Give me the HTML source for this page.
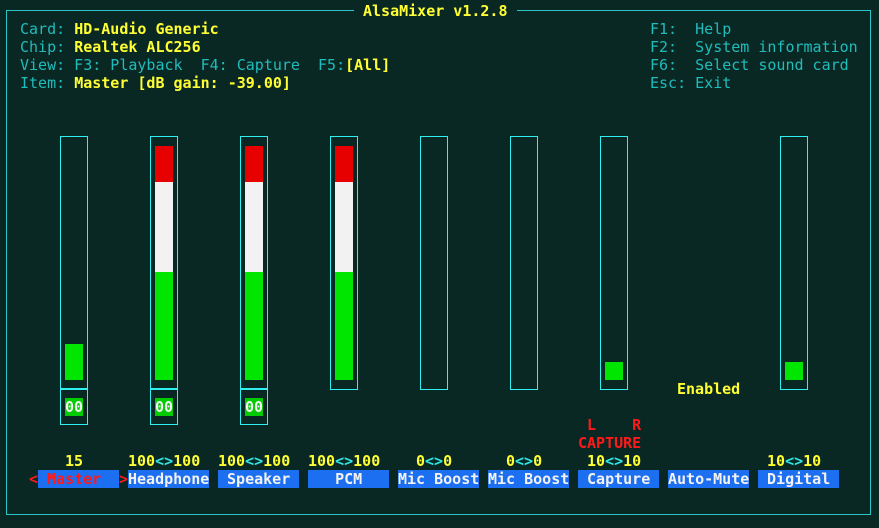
<!DOCTYPE html>
<html><head><meta charset="utf-8"><style>
body{margin:0;width:879px;height:528px;background:#0a2823;overflow:hidden;position:relative;font-family:"DejaVu Sans Mono","Liberation Mono",monospace;font-size:15px;}
.t{position:absolute;line-height:18px;white-space:pre;height:18px;margin-top:1px;}
.c{color:#1fbcbc}.y{color:#ffff33;font-weight:bold}.w{color:#f2f2f2;font-weight:bold}.r{color:#ff1a1a;font-weight:bold}.cy{color:#33e6e6;font-weight:bold}
.b{position:absolute;border:1.5px solid #2ff0f0;box-sizing:border-box}
.f{position:absolute;}
.lab{position:absolute;background:#1d6ff2;height:18px;line-height:18px;color:#f2f2f2;font-weight:bold;white-space:pre;margin-top:1px;}
.oo{position:absolute;background:#00cc00;color:#f2f2f2;font-weight:bold;width:18px;height:18px;line-height:18px;text-align:center;margin-top:1px;}
</style></head><body>
<div style="position:absolute;left:6px;top:10px;width:865px;height:505px;border:1.5px solid #28c8c8;box-sizing:border-box"></div>
<div class="t y" style="left:354px;top:1px;background:#0a2823;padding:0 9px">AlsaMixer v1.2.8</div>
<div class="t" style="left:20px;top:19px"><span class="c">Card: </span><span class="y">HD-Audio Generic</span></div>
<div class="t" style="left:20px;top:37px"><span class="c">Chip: </span><span class="y">Realtek ALC256</span></div>
<div class="t" style="left:20px;top:55px"><span class="c">View: F3: Playback  F4: Capture  F5:</span><span class="y">[All]</span></div>
<div class="t" style="left:20px;top:73px"><span class="c">Item: </span><span class="y">Master [dB gain: -39.00]</span></div>
<div class="t c" style="left:650px;top:19px">F1:  Help</div>
<div class="t c" style="left:650px;top:37px">F2:  System information</div>
<div class="t c" style="left:650px;top:55px">F6:  Select sound card</div>
<div class="t c" style="left:650px;top:73px">Esc: Exit</div>

<div class="b" style="left:60px;top:136px;width:28px;height:254px"></div>
<div class="b" style="left:60px;top:388px;width:28px;height:37px"></div>
<div class="f" style="left:65px;top:344px;width:18px;height:36px;background:#00e600"></div>
<div class="oo" style="left:65px;top:397px">00</div>

<div class="b" style="left:150px;top:136px;width:28px;height:254px"></div>
<div class="b" style="left:150px;top:388px;width:28px;height:37px"></div>
<div class="f" style="left:155px;top:146px;width:18px;height:36px;background:#e60000"></div>
<div class="f" style="left:155px;top:182px;width:18px;height:90px;background:#f2f2f2"></div>
<div class="f" style="left:155px;top:272px;width:18px;height:108px;background:#00e600"></div>
<div class="oo" style="left:155px;top:397px">00</div>

<div class="b" style="left:240px;top:136px;width:28px;height:254px"></div>
<div class="b" style="left:240px;top:388px;width:28px;height:37px"></div>
<div class="f" style="left:245px;top:146px;width:18px;height:36px;background:#e60000"></div>
<div class="f" style="left:245px;top:182px;width:18px;height:90px;background:#f2f2f2"></div>
<div class="f" style="left:245px;top:272px;width:18px;height:108px;background:#00e600"></div>
<div class="oo" style="left:245px;top:397px">00</div>

<div class="b" style="left:330px;top:136px;width:28px;height:254px"></div>
<div class="f" style="left:335px;top:146px;width:18px;height:36px;background:#e60000"></div>
<div class="f" style="left:335px;top:182px;width:18px;height:90px;background:#f2f2f2"></div>
<div class="f" style="left:335px;top:272px;width:18px;height:108px;background:#00e600"></div>

<div class="b" style="left:420px;top:136px;width:28px;height:254px"></div>
<div class="b" style="left:510px;top:136px;width:28px;height:254px"></div>
<div class="b" style="left:600px;top:136px;width:28px;height:254px"></div>
<div class="f" style="left:605px;top:362px;width:18px;height:18px;background:#00e600"></div>
<div class="b" style="left:780px;top:136px;width:28px;height:254px"></div>
<div class="f" style="left:785px;top:362px;width:18px;height:18px;background:#00e600"></div>

<div class="t y" style="left:677px;top:379px">Enabled</div>
<div class="t r" style="left:587px;top:415px">L    R</div>
<div class="t r" style="left:578px;top:433px">CAPTURE</div>

<div class="t y" style="left:65px;top:451px">15</div>
<div class="t y" style="left:128px;top:451px">100<span class="cy">&lt;&gt;</span>100</div>
<div class="t y" style="left:218px;top:451px">100<span class="cy">&lt;&gt;</span>100</div>
<div class="t y" style="left:308px;top:451px">100<span class="cy">&lt;&gt;</span>100</div>
<div class="t y" style="left:416px;top:451px">0<span class="cy">&lt;&gt;</span>0</div>
<div class="t y" style="left:506px;top:451px">0<span class="cy">&lt;&gt;</span>0</div>
<div class="t y" style="left:587px;top:451px">10<span class="cy">&lt;&gt;</span>10</div>
<div class="t y" style="left:767px;top:451px">10<span class="cy">&lt;&gt;</span>10</div>

<div class="t r" style="left:29px;top:469px">&lt;</div>
<div class="lab" style="left:38px;top:469px;width:81px;color:#ff1a1a"> Master</div>
<div class="t r" style="left:119px;top:469px">&gt;</div>
<div class="lab" style="left:128px;top:469px;width:81px">Headphone</div>
<div class="lab" style="left:218px;top:469px;width:81px"> Speaker</div>
<div class="lab" style="left:308px;top:469px;width:81px">   PCM</div>
<div class="lab" style="left:398px;top:469px;width:81px">Mic Boost</div>
<div class="lab" style="left:488px;top:469px;width:81px">Mic Boost</div>
<div class="lab" style="left:578px;top:469px;width:81px"> Capture</div>
<div class="lab" style="left:668px;top:469px;width:81px">Auto-Mute</div>
<div class="lab" style="left:758px;top:469px;width:81px"> Digital</div>
</body></html>
